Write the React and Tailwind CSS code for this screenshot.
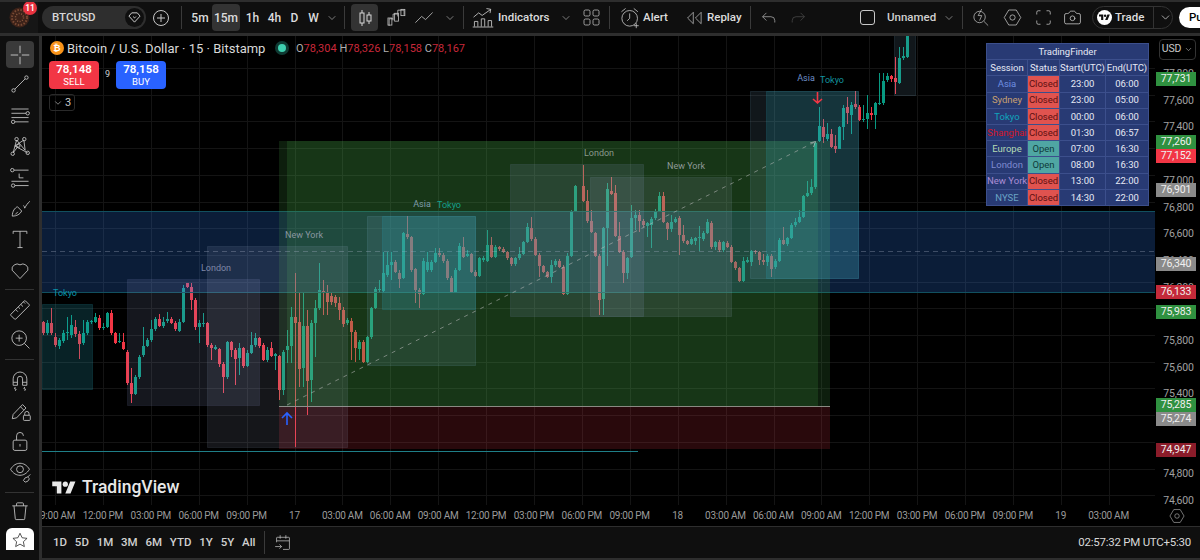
import React from "react";
import { ChevronDown, Camera } from "lucide-react";

const g = 1, r = 0;
const secA = [[r,65,100,62,104],[g,70,100,60,104],[r,70,100,25,106],[r,110,135,100,140],[g,120,138,115,146],[g,100,122,90,128],[g,95,100,50,120],[g,75,105,45,115],[r,80,102,60,110],[r,102,132,92,178],[g,100,130,60,135],[g,65,100,60,104],[g,63,67,60,72],[g,50,65,40,70],[r,55,85,45,90],[g,80,85,70,90],[g,40,80,35,84],[r,40,100,30,104],[r,100,130,95,132],[g,123,127,100,130],[r,125,148,100,150],[r,155,248,150,255],[r,248,283,205,310],[g,230,283,225,286],[g,170,232,165,236],[g,137,165,80,170],[g,120,137,115,140],[g,88,120,60,125],[g,58,88,50,92],[r,58,78,42,82],[g,65,78,50,84],[g,56,62,35,70],[r,58,68,50,72],[r,68,88,64,92],[g,65,92,58,96],[g,-36,65,-45,68],[r,-50,-40,-52,-36],[r,-40,0,-50,30],[r,0,80,-5,90],[g,68,80,60,130],[g,68,72,40,80],[r,70,135,65,140],[r,135,145,130,180],[g,140,148,135,150],[r,148,192,145,200],[r,192,230,185,280],[g,125,230,122,236],[r,125,150,122,170],[r,150,178,145,255],[g,145,175,130,225],[r,145,197,140,205],[g,158,197,150,200],[g,135,158,95,162],[g,113,135,100,140],[r,115,138,110,145],[r,135,180,130,182],[g,150,180,140,185],[r,145,167,125,172],[g,163,167,160,210],[r,167,270,165,300],[g,155,270,150,285]];
const secB = [[g,648,660,600,700],[g,560,648,530,700],[r,560,580,430,950],[r,575,718,490,770],[g,587,715,490,770],[r,587,752,540,855],[g,580,750,570,815],[g,533,580,510,680],[g,480,535,400,540],[r,483,490,450,555],[r,485,515,465,555],[r,497,515,490,525],[r,500,520,495,530],[r,520,540,500,570],[r,540,582,530,590],[g,570,580,565,585],[r,572,605,565,690],[r,607,655,600,695],[g,635,657,630,690],[r,635,695,630,700],[g,622,695,618,700],[g,533,622,530,628],[g,478,533,470,538],[g,476,481,450,490],[g,430,483,365,490],[g,405,435,365,440],[g,395,405,365,450],[r,395,425,390,430],[r,430,447,420,475],[g,310,445,305,448],[r,313,322,258,326],[r,322,420,318,425],[r,418,480,415,520],[r,480,492,475,535],[g,393,492,385,495],[g,395,420,365,425],[g,395,420,390,425],[g,370,395,355,400],[r,370,376,355,380],[r,375,392,370,400],[r,392,443,388,450],[r,443,487,438,490],[g,420,487,415,490],[g,348,420,340,424],[r,350,380,320,385],[g,372,378,360,382],[r,373,427,368,430],[r,427,438,420,442],[g,385,438,380,440],[g,383,390,378,395],[g,345,392,300,396],[r,345,380,320,385],[g,350,380,345,384],[r,352,358,348,362],[r,358,365,352,370],[r,367,385,362,390],[r,385,403,380,408],[g,385,403,380,408],[g,372,385,352,390],[g,337,372,332,376],[g,292,337,280,340],[r,295,328,262,332],[r,328,375,322,378],[r,375,408,370,440],[r,408,425,405,430],[r,427,440,422,444],[g,405,440,390,458],[g,393,405,388,412],[r,393,410,388,415],[r,410,493,405,496],[g,378,493,370,496],[g,243,378,240,382],[g,168,243,165,246]];
const secC = [[r,168,212,105,216],[r,212,273,180,278],[r,273,307,240,310],[r,310,378,305,382],[r,378,510,372,555],[g,295,508,290,555],[g,178,293,160,408],[r,183,192,140,196],[r,190,318,165,322],[r,318,365,275,370],[r,365,428,360,458],[g,385,428,380,448],[g,263,380,225,384],[g,255,263,240,300],[r,255,273,240,305],[r,273,285,268,290],[g,280,287,275,320],[g,268,285,262,355],[g,242,265,238,270],[g,197,242,185,246],[r,197,275,185,280],[r,280,298,275,330],[g,275,298,255,305],[g,267,275,262,280],[r,265,315,258,375],[r,315,333,285,338],[r,333,342,330,345],[g,328,342,322,345],[g,323,333,320,345],[g,320,323,288,362],[g,308,328,302,332],[g,277,308,268,312],[r,278,352,272,356],[g,337,352,332,360],[r,337,360,330,365],[g,337,360,332,365],[r,340,350,332,354],[r,350,395,346,400],[r,397,415,392,420],[r,415,453,410,456],[g,393,453,380,456],[g,391,395,380,400],[g,363,397,360,408],[r,363,367,360,372],[r,367,390,362,405],[r,390,397,372,404],[g,377,397,372,408],[r,377,417,372,442],[g,392,412,388,416],[g,330,392,325,396],[r,330,342,292,345],[g,325,342,320,348],[g,285,325,280,328],[g,275,285,265,290],[g,260,275,240,280],[g,198,260,195,264],[g,190,198,152,200],[g,170,190,148,194],[g,40,172,35,176]];
const secD = [[g,288,332,232,336],[r,290,322,268,340],[g,312,328,278,334],[r,312,350,296,354],[r,348,358,315,368],[g,292,358,288,332],[g,235,290,225,330],[r,232,248,202,282],[g,225,255,215,312],[r,222,230,182,236],[r,230,270,226,274],[g,266,270,225,275],[g,248,268,195,296],[r,250,256,230,270],[g,220,255,215,296],[g,218,222,128,226],[g,152,220,128,224],[g,138,150,128,155],[r,138,148,135,155],[r,145,155,80,192],[g,85,158,52,162],[g,78,85,52,90],[g,18,80,0,84]];

const bars = [];
const add = (sec, xStart, y0) => sec.forEach((c, i) => bars.push({ x: Math.round(xStart + i * 4), up: c[0] === 1, top: Math.round(y0 + c[1] / 3), bot: Math.round(y0 + c[2] / 3), wt: Math.round(y0 + c[3] / 3), wb: Math.round(y0 + c[4] / 3) }));
add(secA, 43.3, 300);
add(secB, 287.3, 130);
add(secC, 582.7, 130);
add(secD, 818.7, 30);

const gridX = Array.from({ length: 23 }, (_, i) => Math.round(55 + 47.9 * i) + 0.5);
const gridY = Array.from({ length: 17 }, (_, i) => Math.round(68 + 26.7 * i) + 0.5);

const TOK = ["rgba(40,170,190,.2)", "rgba(40,170,190,.35)"];
const ASI = ["rgba(130,180,210,.13)", "rgba(130,180,210,.3)"];
const LON = ["rgba(150,160,210,.14)", "rgba(150,160,210,.22)"];
const NYC = ["rgba(170,180,215,.12)", "rgba(170,180,215,.22)"];

function ChartCanvas() {
  const box = (x, y, w, h, c) => (
    <rect x={x + 0.5} y={y + 0.5} width={w} height={h} fill={c[0]} stroke={c[1]} strokeWidth="1" strokeDasharray="1 1" />
  );
  return (
    <svg className="absolute inset-0 block" width="1113" height="469" viewBox="42 36 1113 469">
      {gridX.map((x) => <line key={x} x1={x} x2={x} y1="36" y2="505" stroke="#141414" />)}
      {gridY.map((y) => <line key={y} x1="42" x2="1155" y1={y} y2={y} stroke="#141414" />)}
      {bars.map((b, i) => (
        <g key={i} fill={b.up ? "#089981" : "#f23645"}>
          <rect x={b.x} y={b.wt} width="1" height={b.wb - b.wt} />
          <rect x={b.x - 1} y={b.top} width="3" height={Math.max(1, b.bot - b.top)} />
        </g>
      ))}
      <rect x="42" y="211" width="1113" height="82" fill="rgba(50,130,255,.22)" />
      <line x1="42" x2="1155" y1="211.5" y2="211.5" stroke="#11505f" />
      <line x1="42" x2="1155" y1="292.5" y2="292.5" stroke="#11505f" />
      <rect x="279" y="141" width="539" height="265" fill="rgba(76,175,80,.17)" />
      <rect x="287" y="141" width="543" height="265" fill="rgba(76,175,80,.17)" />
      <rect x="279" y="406" width="551" height="43" fill="rgba(242,54,69,.17)" />
      <line x1="42" x2="1155" y1="251.5" y2="251.5" stroke="rgba(170,180,200,.32)" strokeDasharray="5 4" />
      <line x1="279" x2="830" y1="406.5" y2="406.5" stroke="#8a8a82" />
      <line x1="42" x2="638" y1="451.5" y2="451.5" stroke="#1f7f88" />
      {box(42, 304, 50, 85, TOK)}
      {box(127, 279, 132, 126, LON)}
      {box(207, 246, 140, 201, NYC)}
      {box(367, 216, 108, 149, ASI)}
      {box(382, 216, 93, 93, TOK)}
      {box(510, 164, 133, 152, LON)}
      {box(590, 177, 141, 139, NYC)}
      {box(750, 91, 108, 187, ASI)}
      {box(766, 91, 92, 187, TOK)}
      {box(894, 30, 21, 65, ASI)}
      <line x1="287" y1="405" x2="815" y2="142" stroke="rgba(190,190,190,.55)" strokeDasharray="4 5" />
      <path d="M810 143 L815.5 141.5 L813.5 147" fill="none" stroke="rgba(190,190,190,.7)" />
      <path d="M287 425 V413 M282 418 L287 413 L292 418" fill="none" stroke="#2962ff" strokeWidth="1.6" />
      <path d="M817.5 92 V103 M813 99 L817.5 103 L822 99" fill="none" stroke="#f23645" strokeWidth="1.6" />
    </svg>
  );
}

const I = ({ children, className = "", s = 28, w = 1, fill = "none" }) => (
  <svg width={s} height={s} viewBox="0 0 28 28" fill={fill} stroke="currentColor" strokeWidth={w} className={"shrink-0 " + className}>{children}</svg>
);

const tools = [
  <path key="0" d="M14 4v8M14 16v8M4 14h8M16 14h8" />,
  <g key="1"><path d="M8 20 L20 8" /><circle cx="6.5" cy="21.5" r="2" /><circle cx="21.5" cy="6.5" r="2" /></g>,
  <g key="2"><path d="M4 7h20M4 12h17M4 17h20M8 22h16" /><circle cx="23" cy="12" r="2" /><circle cx="6" cy="22" r="2" /></g>,
  <g key="3"><path d="M6 22 L10 7 L20 19 L18.5 7 L8 14 L23 22 M6 22 L12 14" /><circle cx="5.5" cy="23" r="2" /><circle cx="10" cy="6" r="2" /><circle cx="19" cy="6" r="2" /><circle cx="23" cy="22" r="2" /><circle cx="12" cy="14" r="2" /></g>,
  <g key="4"><path d="M7 6h17M4 19h20M8 24h16M13 10v5h5" /><circle cx="5" cy="6" r="2" /><circle cx="6" cy="24" r="2" /></g>,
  <g key="5"><path d="M5 23.5c0-6 3-9.5 6-11l5 5c-2 4-6 6-11 6Z M8.5 21.5l3-3 M18 11c1 1 1.5 2.2 1.5 3.2 1.5-3 3-5.4 6-8" /></g>,
  <path key="6" d="M6 8V5h16v3M14 5v19M11 24h6" />,
  <path key="7" d="M14 24 4.8 14.2A6 6 0 0 1 14 8a6 6 0 0 1 9.2 6.2Z" />,
];
const tools2 = [
  <g key="0"><rect x="2" y="10" width="24" height="8" rx="1" transform="rotate(-45 14 14)" /><path d="M9 13.5l2.5 2.5M12 10.5l2 2M15 7.5l2.5 2.5M18 4.5l2 2" /></g>,
  <g key="1"><circle cx="13" cy="13" r="8.5" /><path d="M19 19l6 6M13 9v8M9 13h8" /></g>,
];
const tools3 = [
  <g key="0"><path d="M6 19v-7.5a8 8 0 0 1 16 0V19h-5v-7.5a3 3 0 0 0-6 0V19ZM6 15.5h5M17 15.5h5M8.5 21l-1 2 2 .5-1 2M19.5 21l-1 2 2 .5-1 2" /></g>,
  <g key="1"><path d="M5 23l1-5L17 6.5 21 10.5 10 22ZM14.5 9l4 4" /><rect x="18" y="19" width="8" height="6" rx="1" /><path d="M19.5 19v-2a2.5 2.5 0 0 1 5 0v2" /></g>,
  <g key="2"><rect x="6" y="13" width="16" height="12" rx="2" /><path d="M10 13V8a4 4 0 0 1 8 0M14 17.5v3" /></g>,
  <g key="3"><path d="M3 12c3-5 7-7 11-7s8 2 11 7c-3 5-7 7-11 7s-8-2-11-7Z" /><circle cx="14" cy="12" r="4" /><path d="M18 25l2-3 3-1 2 2-2 3-3 1ZM23 21l3-3" /></g>,
];

const tfRow = ["5m", "15m", "1h", "4h", "D", "W"];
const times = ["09:00 AM","12:00 PM","03:00 PM","06:00 PM","09:00 PM","17","03:00 AM","06:00 AM","09:00 AM","12:00 PM","03:00 PM","06:00 PM","09:00 PM","18","03:00 AM","06:00 AM","09:00 AM","12:00 PM","03:00 PM","06:00 PM","09:00 PM","19","03:00 AM"];
const ranges = ["1D","5D","1M","3M","6M","YTD","1Y","5Y","All"];
const prices = ["77,800","77,600","77,400","","77,000","76,800","76,600","76,400","76,200","","75,800","75,600","75,400","","75,000","74,800","74,600"];
const rows = [
  ["Asia","text-[#6f8fe0]","Closed","23:00","06:00"],
  ["Sydney","text-[#c8a070]","Closed","23:00","05:00"],
  ["Tokyo","text-[#10a5bd]","Closed","00:00","06:00"],
  ["Shanghai","text-[#d01828]","Closed","01:30","06:57"],
  ["Europe","text-[#b5dcb5]","Open","07:00","16:30"],
  ["London","text-[#7f8ad0]","Open","08:00","16:30"],
  ["New York","text-[#ab8dd4]","Closed","13:00","22:00"],
  ["NYSE","text-[#6aa3c4]","Closed","14:30","22:00"],
];

const Label = ({ x, y, c, children }) => (
  <div className={"absolute -translate-x-1/2 -translate-y-1/2 text-[9px] leading-none whitespace-nowrap " + c} style={{ left: x - 42, top: y - 36 }}>{children}</div>
);
const Tag = ({ y, c, t }) => (
  <div className={"absolute left-px w-10 h-[14px] flex items-center justify-center text-[10.5px] tracking-[-0.2px] leading-none text-[#f0f0f0] " + c} style={{ top: y - 36 }}>{t}</div>
);
const Div = ({ cls = "mx-[6px]" }) => <div className={"w-px h-[23px] bg-[#3a3a3a] shrink-0 " + cls} />;

export default function App() {
  return (
    <div className="w-[1200px] h-[560px] bg-[#2e2e2e] overflow-hidden pt-[2px] text-[#dcdcdc] flex flex-col" style={{ fontFamily: 'Roboto, sans-serif' }}>
      {/* top bar */}
      <div className="h-[31px] bg-[#0f0f0f] flex items-center shrink-0 text-[11.5px] relative overflow-hidden">
        <div className="w-[38px] h-[31px] shrink-0 flex items-center justify-center bg-[#161616] relative">
          <svg width="21" height="21" viewBox="0 0 21 21">
            <circle cx="10.5" cy="10.5" r="10" fill="#3c2219" />
            <circle cx="10.5" cy="10.5" r="7.5" fill="none" stroke="#7a4a33" strokeWidth="2" strokeDasharray="1.5 1.5" />
            <circle cx="10.5" cy="10.5" r="4" fill="none" stroke="#8a5a40" strokeWidth="1.5" strokeDasharray="1 1.5" />
          </svg>
          <div className="absolute left-[23px] top-[-1px] w-[14px] h-[14px] rounded-full bg-[#e8323f] text-white text-[8.5px] font-semibold flex items-center justify-center leading-none">11</div>
        </div>
        <div className="ml-1 w-[104px] h-[23px] rounded-full bg-[#2e2e2e] flex items-center justify-between pl-[10px] pr-[2px] text-[#d8d8d8] font-medium text-[11.5px]">
          <span>BTCUSD</span>
          <span className="w-[19px] h-[19px] rounded-full bg-[#0f0f0f] flex items-center justify-center">
            <svg width="13" height="13" viewBox="0 0 14 14" fill="none" stroke="#d8d8d8" strokeWidth="1"><path d="M4 2h6l3 3.5L7 12 1 5.5ZM5.5 6 7 7.5 8.5 6" /></svg>
          </span>
        </div>
        <div className="ml-[7px] w-[16px] h-[16px] rounded-full border border-[#c8c8c8] flex items-center justify-center">
          <svg width="10" height="10" viewBox="0 0 10 10" stroke="#c8c8c8" strokeWidth="1"><path d="M5 1v8M1 5h8" /></svg>
        </div>
        <Div cls="ml-[12px] mr-[7px]" />
        {tfRow.map((t) => (
          <div key={t} className={"h-[27px] flex items-center justify-center rounded font-medium text-[12px] " + (t === "15m" ? "bg-[#333333] w-[28px] mx-[1px]" : t === "5m" ? "w-[22px]" : t === "1h" ? "w-[21px] mx-[1px]" : t === "4h" ? "w-[21px]" : "w-[19px]")}>{t}</div>
        ))}
        <ChevronDown size={12} strokeWidth={1.25} className="ml-[3px] text-[#bbb]" />
        <Div cls="ml-[6px] mr-[6px]" />
        <div className="w-[27px] h-[27px] bg-[#333333] rounded flex items-center justify-center">
          <svg width="18" height="18" viewBox="0 0 18 18" fill="none" stroke="#d8d8d8"><path d="M6 1v16M13 3v12" /><rect x="4" y="4" width="4" height="10" fill="#333" /><rect x="11" y="6" width="4" height="6" fill="#333" /></svg>
        </div>
        <div className="ml-[5px] w-[28px] flex justify-center text-[#c8c8c8]">
          <I s={22}><path d="M4 24V15h5M9 17V9h6M15 12V4h8v6" /><rect x="2.5" y="14" width="5" height="9" /><rect x="11" y="8" width="5" height="10" /><rect x="19" y="3" width="5" height="8" /></I>
        </div>
        <div className="ml-[1px] w-[24px] flex justify-center text-[#c8c8c8]"><I s={22}><path d="M3 20l8-8 5 4 9-9" /></I></div>
        <ChevronDown size={12} strokeWidth={1.25} className="ml-[8px] text-[#bbb]" />
        <Div cls="ml-[7px] mr-[7px]" />
        <div className="text-[#c8c8c8]"><I s={24}><path d="M3 13l6-5 4 3 10-7M18 3l5 .8-.8 4.5M4 24v-6h4v6M12 24v-9h4v9M20 24v-7h4v7M2 24.5h24" /></I></div>
        <span className="ml-[3px] font-medium w-[51px] whitespace-nowrap">Indicators</span>
        <ChevronDown size={12} strokeWidth={1.25} className="ml-[11px] text-[#bbb]" />
        <div className="ml-[9px] text-[#c8c8c8]"><I s={21}><rect x="4" y="4" width="8" height="8" rx="2" /><rect x="16" y="4" width="8" height="8" rx="2" /><rect x="4" y="16" width="8" height="8" rx="2" /><rect x="16" y="16" width="8" height="8" rx="2" /></I></div>
        <Div cls="ml-[7px] mr-[9px]" />
        <div className="text-[#c8c8c8]"><I s={23}><circle cx="13" cy="15" r="9.5" /><path d="M13 9v6l-3 3M3 7l5-4M23 7l-5-4M21 21v6M18 24h6" /></I></div>
        <span className="ml-[1px] w-[30px] font-medium">Alert</span>
        <div className="ml-[11px] text-[#c8c8c8]"><I s={20}><path d="M13 6 5 14l8 8ZM24 6l-8 8 8 8Z" /></I></div>
        <span className="ml-[3px] w-[36px] font-medium">Replay</span>
        <Div cls="ml-[7px] mr-[9px]" />
        <div className="text-[#c8c8c8]"><I s={18}><path d="M10 6 4 12l6 6M4 12h13a6 6 0 0 1 6 6v3" /></I></div>
        <div className="ml-[11px] text-[#555]"><I s={18}><path d="M18 6l6 6-6 6M24 12H11a6 6 0 0 0-6 6v3" /></I></div>
        <div className="flex-1" />
        <div className="absolute left-[860px] top-[8px] w-[15px] h-[15px] rounded-[3px] border border-[#c8c8c8]" />
        <div className="absolute left-[887px] top-0 h-[31px] flex items-center font-medium text-[#d0d0d0]">Unnamed</div>
        <ChevronDown size={12} strokeWidth={1.25} className="absolute left-[943px] top-[10px] text-[#bbb]" />
        <div className="absolute left-[962px] top-[4px] w-px h-[23px] bg-[#3a3a3a]" />
        <div className="absolute left-[971px] top-[5px] text-[#c8c8c8]"><I s={20}><circle cx="12" cy="14" r="8" /><path d="M18 20l6 6M15 3l-5 9h5l-3 7" /></I></div>
        <div className="absolute left-[1002px] top-[5px] text-[#c8c8c8]"><I s={21}><path d="M9 4h10l6 10-6 10H9L3 14Z" /><circle cx="14" cy="14" r="3.5" /></I></div>
        <div className="absolute left-[1033px] top-[5px] text-[#c8c8c8]"><I s={21}><path d="M5 10V7a2 2 0 0 1 2-2h3M18 5h3a2 2 0 0 1 2 2v3M23 18v3a2 2 0 0 1-2 2h-3M10 23H7a2 2 0 0 1-2-2v-3" /></I></div>
        <Camera size={19} strokeWidth={1} className="absolute left-[1063px] top-[6px] text-[#c8c8c8]" />
        <div className="absolute left-[1092px] top-[4px] w-[81px] h-[23px] rounded-full border border-[#333] flex items-center">
          <span className="ml-[4px] w-[15px] h-[15px] rounded-full bg-white flex items-center justify-center">
            <svg width="11" height="9" viewBox="0 0 36 28" fill="#0f0f0f"><path d="M14 22H7V11H0V4h14v18zM28 22h-8l7.5-18h8L28 22z" /><circle cx="20" cy="8" r="4" /></svg>
          </span>
          <span className="ml-[3px] w-[35px] font-medium">Trade</span>
          <span className="ml-[3px] w-px h-[23px] bg-[#333]" />
          <ChevronDown size={13} strokeWidth={1.5} className="ml-[5px] text-[#c8c8c8]" />
        </div>
        <div className="absolute left-[1179px] top-[5px] w-[60px] h-[21px] rounded-full bg-white text-black font-medium flex items-center pl-[10px]">Publish</div>
      </div>

      <div className="flex flex-1 mt-[3px] min-h-0 gap-[3px]">
        {/* left toolbar */}
        <div className="w-[39px] bg-[#0f0f0f] flex flex-col items-center shrink-0 text-[#c8c8c8] pt-[5px] overflow-hidden">
          <div className="w-[28px] h-[27px] shrink-0 rounded bg-[#3a3a3a] flex items-center justify-center"><I s={26}>{tools[0]}</I></div>
          {tools.slice(1).map((t, i) => <div key={i} className="h-[30px] shrink-0 flex items-center justify-center mt-px"><I s={24}>{t}</I></div>)}
          <div className="w-[29px] h-px shrink-0 bg-[#333] mt-[4px] mb-[5px]" />
          {tools2.map((t, i) => <div key={i} className="h-[29px] shrink-0 flex items-center justify-center"><I s={24}>{t}</I></div>)}
          <div className="w-[29px] h-px shrink-0 bg-[#333] mt-[6px] mb-[6px]" />
          {tools3.map((t, i) => <div key={i} className="h-[30px] shrink-0 flex items-center justify-center"><I s={24}>{t}</I></div>)}
          <div className="w-[29px] h-px shrink-0 bg-[#333] mt-[6px] mb-[6px]" />
          <I s={24}><path d="M5 8h18M10 8V5.5a1 1 0 0 1 1-1h6a1 1 0 0 1 1 1V8M7 8l1.5 15a1 1 0 0 0 1 1h9a1 1 0 0 0 1-1L21 8" /></I>
          <div className="mt-[5px] w-[28px] h-[22px] shrink-0 bg-white rounded-t-md flex justify-center pt-[3px] text-[#222]">
            <svg width="18" height="18" viewBox="0 0 24 24" fill="none" stroke="currentColor"><path d="m12 3 2.8 6 6.6.8-4.9 4.5 1.3 6.5-5.8-3.3-5.8 3.3 1.3-6.5L2.6 9.8 9.2 9Z" /></svg>
          </div>
        </div>

        {/* main */}
        <div className="flex-1 min-w-0 flex flex-col">
          <div className="flex-1 min-h-0 bg-black relative overflow-hidden">
            <ChartCanvas />
            {/* legend */}
            <div className="absolute left-[8px] top-[3px] h-[18px] flex items-center whitespace-nowrap">
              <span className="w-[14px] h-[14px] rounded-full bg-[#f7931a] text-white text-[9px] font-bold flex items-center justify-center leading-none">₿</span>
              <span className="ml-[3px] w-[202px] text-[13px] text-[#d8d8d8] leading-none">Bitcoin / U.S. Dollar · 15 · Bitstamp</span>
              <span className="ml-[6px] w-[14px] h-[14px] rounded-full bg-[#0f3a33] flex items-center justify-center"><span className="w-[8px] h-[8px] rounded-full bg-[#3fd0b0]" /></span>
              <span className="ml-[7px] text-[11px] leading-none text-[#b0b0b0]">O<span className="text-[#c8283a]">78,304</span> H<span className="text-[#c8283a]">78,326</span> L<span className="text-[#c8283a]">78,158</span> C<span className="text-[#c8283a]">78,167</span></span>
            </div>
            <div className="absolute left-[7px] top-[25px] flex items-center">
              <div className="w-[50px] h-[28px] rounded bg-[#f23645] text-white flex flex-col items-center justify-center leading-none"><span className="text-[11.5px] font-semibold">78,148</span><span className="text-[9.5px] mt-[1px]">SELL</span></div>
              <span className="w-[17px] text-center text-[9px] text-[#d0d0d0]">9</span>
              <div className="w-[50px] h-[28px] rounded bg-[#2962ff] text-white flex flex-col items-center justify-center leading-none"><span className="text-[11.5px] font-semibold">78,158</span><span className="text-[9.5px] mt-[1px]">BUY</span></div>
            </div>
            <div className="absolute left-[7px] top-[58px] w-[26px] h-[17px] rounded-[3px] border border-[#2a2a2a] flex items-center justify-center text-[11px] text-[#c8c8c8] leading-none gap-[2px]"><ChevronDown size={10} strokeWidth={1.5} />3</div>

            {/* session labels */}
            <Label x={65} y={293} c="text-[#0a92a8]">Tokyo</Label>
            <Label x={216} y={268} c="text-[#7f88a8]">London</Label>
            <Label x={304} y={235} c="text-[#8a97a0]">New York</Label>
            <Label x={422} y={204} c="text-[#7f9cab]">Asia</Label>
            <Label x={449} y={205} c="text-[#16a08c]">Tokyo</Label>
            <Label x={599} y={153} c="text-[#8a9a8c]">London</Label>
            <Label x={686} y={166} c="text-[#8f9a98]">New York</Label>
            <Label x={806} y={78} c="text-[#6f8fc8]">Asia</Label>
            <Label x={832} y={80} c="text-[#12939f]">Tokyo</Label>

            {/* logo */}
            <div className="absolute left-[10px] top-[443px] flex items-center text-[#e8e8e8]">
              <svg width="24" height="17" viewBox="0 0 36 26" fill="currentColor"><path d="M14 22H7V11H0V4h14v18zM28 22h-8l7.5-18h8L28 22z" /><circle cx="20" cy="8" r="4" /></svg>
              <span className="ml-[6px] text-[17.5px] font-medium leading-none">TradingView</span>
            </div>

            {/* session table */}
            <table className="absolute left-[944px] top-[7px] w-[162px] table-fixed border-collapse bg-[#283a74] text-[9.5px] leading-none text-center text-[#e6e9f4]">
              <colgroup><col className="w-[41px]" /><col className="w-[32px]" /><col className="w-[46px]" /><col className="w-[43px]" /></colgroup>
              <tbody>
                <tr className="h-[16.2px]"><td colSpan="4" className="border border-[#3c4f8c]">TradingFinder</td></tr>
                <tr className="h-[16.2px]">{["Session","Status","Start(UTC)","End(UTC)"].map((h) => <td key={h} className="border border-[#3c4f8c] whitespace-nowrap overflow-hidden">{h}</td>)}</tr>
                {rows.map((x) => (
                  <tr key={x[0]} className="h-[16.2px]">
                    <td className={"border border-[#3c4f8c] whitespace-nowrap " + x[1]}>{x[0]}</td>
                    <td className={"border border-[#3c4f8c] " + (x[2] === "Open" ? "bg-[#4fa6a3] text-[#103a3a]" : "bg-[#e0534f] text-[#5c1010]")}>{x[2]}</td>
                    <td className="border border-[#3c4f8c]">{x[3]}</td>
                    <td className="border border-[#3c4f8c]">{x[4]}</td>
                  </tr>
                ))}
              </tbody>
            </table>

            {/* price axis */}
            <div className="absolute right-0 top-0 bottom-0 w-[45px] bg-black text-[10.5px] tracking-[-0.2px] text-[#a0a0a0]">
              <div className="absolute left-[4px] top-[3px] w-[37px] h-[21px] rounded border border-[#333] flex items-center justify-center gap-[3px] text-[10.5px] text-[#c8c8c8] leading-none">USD<ChevronDown size={9} strokeWidth={1.5} /></div>
              <div className="absolute left-0 top-[25px] w-full flex flex-col">
                {prices.map((p, i) => <div key={i} className="h-[26.7px] flex items-center justify-center pl-[2px] leading-none">{p}</div>)}
              </div>
              <Tag y={72} c="bg-[#2f9140]" t="77,731" />
              <Tag y={135} c="bg-[#2f9140]" t="77,260" />
              <Tag y={149} c="bg-[#f23645]" t="77,152" />
              <Tag y={183} c="bg-[#8a8a8a]" t="76,901" />
              <Tag y={257} c="bg-[#8a8a8a]" t="76,340" />
              <Tag y={285} c="bg-[#c42a3a]" t="76,133" />
              <Tag y={305} c="bg-[#2f9140]" t="75,983" />
              <Tag y={398} c="bg-[#2f9140]" t="75,285" />
              <Tag y={412} c="bg-[#8a8a8a]" t="75,274" />
              <Tag y={443} c="bg-[#8b1c2a]" t="74,947" />
            </div>
          </div>

          {/* time axis */}
          <div className="h-[21px] shrink-0 bg-black flex relative overflow-hidden text-[10px] tracking-[-0.25px] text-[#9a9a9a]">
            <div className="flex -ml-[11px] items-center pt-[1px]">
              {times.map((t, i) => <div key={i} className="w-[47.9px] shrink-0 text-center whitespace-nowrap leading-none flex justify-center">{t}</div>)}
            </div>
            <div className="absolute left-[1126px] top-[2px] text-[#b0b0b0]"><I s={18}><path d="M9 4h10l6 10-6 10H9L3 14Z" /><circle cx="14" cy="14" r="3.5" /></I></div>
          </div>

          {/* bottom bar */}
          <div className="h-[31px] shrink-0 mt-px bg-[#0f0f0f] flex items-center text-[11.5px] font-medium text-[#d0d0d0]">
            <div className="flex items-center gap-[7.8px] pl-[11px]">
              {ranges.map((t) => <span key={t} className="leading-none whitespace-nowrap">{t}</span>)}
            </div>
            <Div cls="ml-[8px] mr-[8px]" />
            <I s={20} className="text-[#c8c8c8]"><path d="M5 13V7a1 1 0 0 1 1-1h16a1 1 0 0 1 1 1v15a1 1 0 0 1-1 1h-8M5 11h18M10 3v5M18 3v5M3 19h9M9 16l3 3-3 3" /></I>
            <div className="flex-1" />
            <span className="mr-[9px] text-[11.5px] tracking-[-0.25px] font-normal text-[#d8d8d8]">02:57:32 PM UTC+5:30</span>
          </div>
          <div className="h-[2px] shrink-0" />
        </div>
      </div>
    </div>
  );
}
